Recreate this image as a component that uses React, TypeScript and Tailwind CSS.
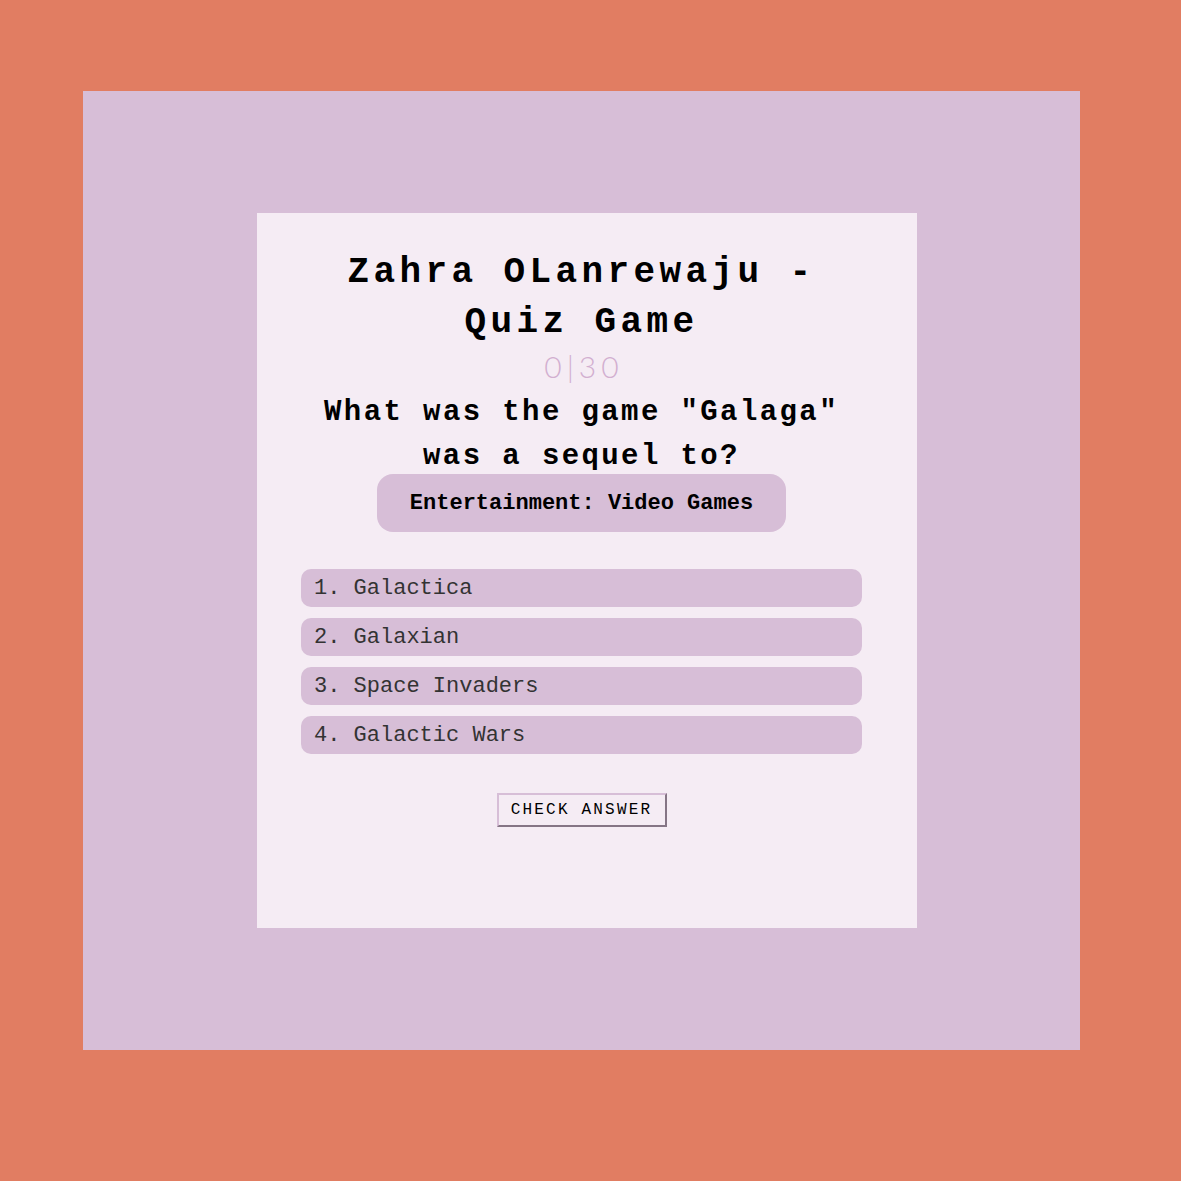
const answers = ["Galactica", "Galaxian", "Space Invaders", "Galactic Wars"];

function AnswerRow({ index, text }: { index: number; text: string }) {
  return (
    <div className="flex h-[38px] items-center rounded-[10px] bg-[#d7bed7] pl-[13px] text-[22px] text-[#333333]">
      {index}. {text}
    </div>
  );
}

export default function App() {
  return (
    <div
      className="min-h-[1181px] bg-[#e17d62] pl-[83px] pt-[91px]"
      style={{ fontFamily: '"Liberation Mono", "Courier New", monospace' }}
    >
      <div className="h-[959px] w-[997px] bg-[#d7bed7] pl-[174px] pt-[122px]">
        <div className="flex h-[715px] w-[660px] flex-col bg-[#f5ecf4] pl-[44px] pr-[55px] pt-[35px]">
          <h1 className="text-center text-[36px] font-bold leading-[50px] tracking-[4.4px] text-black">
            Zahra OLanrewaju - Quiz Game
          </h1>
          <div
            className="pl-[5px] text-center text-[30px] font-light leading-[36px] tracking-[5px] text-[#d2afd0]"
            style={{ fontFamily: "Lato, sans-serif" }}
          >
            0|30
          </div>
          <h2 className="mt-[7px] text-center text-[29px] font-bold leading-[44px] tracking-[2.4px] text-black">
            What was the game "Galaga" was a sequel to?
          </h2>
          <div className="mt-[-5px] flex justify-center">
            <div className="flex h-[58px] w-[409px] items-center justify-center rounded-[16px] bg-[#d7bed7] text-[22px] font-bold text-black">
              Entertainment: Video Games
            </div>
          </div>
          <div className="mt-[37px] flex flex-col gap-[11px]">
            {answers.map((a, i) => (
              <AnswerRow key={a} index={i + 1} text={a} />
            ))}
          </div>
          <div className="mt-[39px] flex justify-center">
            <button className="h-[34px] w-[170px] border-2 border-b-[#857585] border-l-[#d7bed7] border-r-[#857585] border-t-[#d7bed7] bg-[#f5ecf4] text-[16px] uppercase tracking-[2.2px] text-black">
              Check Answer
            </button>
          </div>
        </div>
      </div>
    </div>
  );
}
